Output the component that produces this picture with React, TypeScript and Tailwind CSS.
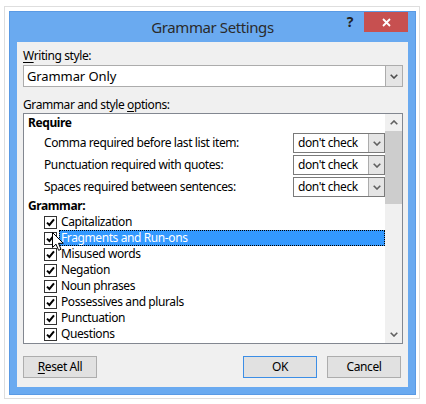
import React from "react";

const ChevDown = ({ color = "#4d4d4d" }: { color?: string }) => (
  <svg width="8" height="5" viewBox="0 0 8 5">
    <path d="M0.7 0.7 L4 4 L7.3 0.7" stroke={color} strokeWidth="1.6" fill="none" />
  </svg>
);

const ChevUp = () => (
  <svg width="8" height="5" viewBox="0 0 8 5">
    <path d="M0.7 4.3 L4 1 L7.3 4.3" stroke="#606060" strokeWidth="1.6" fill="none" />
  </svg>
);

const Check = () => (
  <div className="w-[13px] h-[13px] border border-[#333333] bg-white flex items-center justify-center shrink-0">
    <svg width="9" height="9" viewBox="0 0 9 9">
      <path d="M1 4.6 L3.4 7 L8 1.4" stroke="#000" strokeWidth="2" fill="none" />
    </svg>
  </div>
);

const Dropdown = () => (
  <div className="w-[92px] h-[20px] border border-[#7a7a7a] bg-white flex shrink-0">
    <div className="flex-1 pl-[4px] leading-[18px] whitespace-nowrap overflow-hidden">don't check</div>
    <div className="w-[16px] h-full bg-[#e5e5e5] border-l border-[#acacac] flex items-center justify-center">
      <ChevDown color="#606060" />
    </div>
  </div>
);

const checks = [
  "Capitalization",
  "Fragments and Run-ons",
  "Misused words",
  "Negation",
  "Noun phrases",
  "Possessives and plurals",
  "Punctuation",
  "Questions",
];

export default function App() {
  return (
    <div className="relative w-[426px] h-[404px] bg-white pt-[6px] pl-[4px] font-['Noto_Sans',sans-serif] text-[12px] tracking-[-0.4px] text-black">
      <div className="w-[416px] h-[393px] border border-[#dedede] pt-[4px] pl-[4px]">
        <div className="w-[407px] h-[384px] bg-[#6aaaf0] border border-[#5a9ae4] flex flex-col px-[7px]">
          {/* title bar */}
          <div className="relative h-[30px] flex items-center justify-center">
            <div className="text-[15px] text-[#2b2b2b] mt-[1px]">Grammar Settings</div>
            <div className="absolute right-0 top-0 flex items-start">
              <div className="text-[14px] font-bold text-[#222] mt-[2px] mr-[11px] leading-[16px]">?</div>
              <div className="w-[44px] h-[20px] bg-[#c75050] flex items-center justify-center">
                <svg width="9" height="9" viewBox="0 0 9 9">
                  <path d="M1 1 L8 8 M8 1 L1 8" stroke="#fff" strokeWidth="1.8" />
                </svg>
              </div>
            </div>
          </div>
          {/* client */}
          <div className="h-[345px] bg-[#f0f0f0] pl-[6px] pr-[5px] pt-[6px] flex flex-col">
            <div className="h-[16px] leading-[16px] shrink-0">
              <span className="underline underline-offset-2">W</span>riting style:
            </div>
            <div className="mt-[1px] h-[22px] shrink-0 border border-[#acacac] bg-white flex">
              <div className="flex-1 pl-[3px] leading-[20px] text-[13px] tracking-[-0.1px]">Grammar Only</div>
              <div className="w-[17px] h-full bg-[#e5e5e5] border-l border-[#acacac] flex items-center justify-center">
                <ChevDown />
              </div>
            </div>
            <div className="mt-[10px] h-[16px] leading-[16px] shrink-0">
              Grammar and style <span className="underline underline-offset-2">o</span>ptions:
            </div>
            <div className="h-[231px] shrink-0 border border-[#828790] bg-white flex overflow-hidden">
              <div className="flex-1 flex flex-col overflow-hidden">
                <div className="h-[18px] shrink-0 leading-[18px] pl-[4px] font-bold">Require</div>
                {[
                  "Comma required before last list item:",
                  "Punctuation required with quotes:",
                  "Spaces required between sentences:",
                ].map((t) => (
                  <div key={t} className="h-[22px] shrink-0 flex items-center justify-between pl-[20px]">
                    <span>{t}</span>
                    <Dropdown />
                  </div>
                ))}
                <div className="h-[16px] shrink-0 leading-[16px] pl-[4px] font-bold">Grammar:</div>
                {checks.map((t, i) => (
                  <div key={t} className="h-[16px] shrink-0 flex items-center pl-[20px]">
                    <Check />
                    {i === 1 ? (
                      <div className="ml-[2px] flex-1 h-[16px] bg-[#3399ff] border border-dotted border-black pl-[1px] leading-[14px] text-white">
                        {t}
                      </div>
                    ) : (
                      <div className="ml-[2px] pl-[2px] leading-[16px]">{t}</div>
                    )}
                  </div>
                ))}
                <div className="h-[16px] shrink-0 flex items-center pl-[20px]">
                  <Check />
                </div>
              </div>
              <div className="w-[17px] shrink-0 bg-[#f0f0f0] flex flex-col">
                <div className="h-[17px] flex items-center justify-center">
                  <ChevUp />
                </div>
                <div className="h-[73px] bg-[#cdcdcd]" />
                <div className="flex-1" />
                <div className="h-[17px] flex items-center justify-center">
                  <ChevDown color="#606060" />
                </div>
              </div>
            </div>
            <div className="mt-[12px] flex pr-[2px] shrink-0">
              <div className="w-[74px] h-[22px] bg-[#e1e1e1] border border-[#adadad] flex items-center justify-center">
                <span>
                  <span className="underline underline-offset-2">R</span>eset All
                </span>
              </div>
              <div className="flex-1" />
              <div className="w-[74px] h-[22px] bg-[#e1e1e1] border border-[#3c8ee6] flex items-center justify-center">
                OK
              </div>
              <div className="ml-[10px] w-[74px] h-[22px] bg-[#e1e1e1] border border-[#adadad] flex items-center justify-center">
                Cancel
              </div>
            </div>
          </div>
        </div>
      </div>
      {/* mouse cursor */}
      <svg className="absolute left-[52px] top-[232px]" width="13" height="20" viewBox="0 0 13 20">
        <path
          d="M0.5 0.5 L0.5 15.5 L4 12.2 L6.6 18.3 L9 17.3 L6.5 11.3 L11.3 11.3 Z"
          fill="#fff"
          stroke="#000"
          strokeWidth="1"
          strokeLinejoin="round"
        />
      </svg>
    </div>
  );
}
